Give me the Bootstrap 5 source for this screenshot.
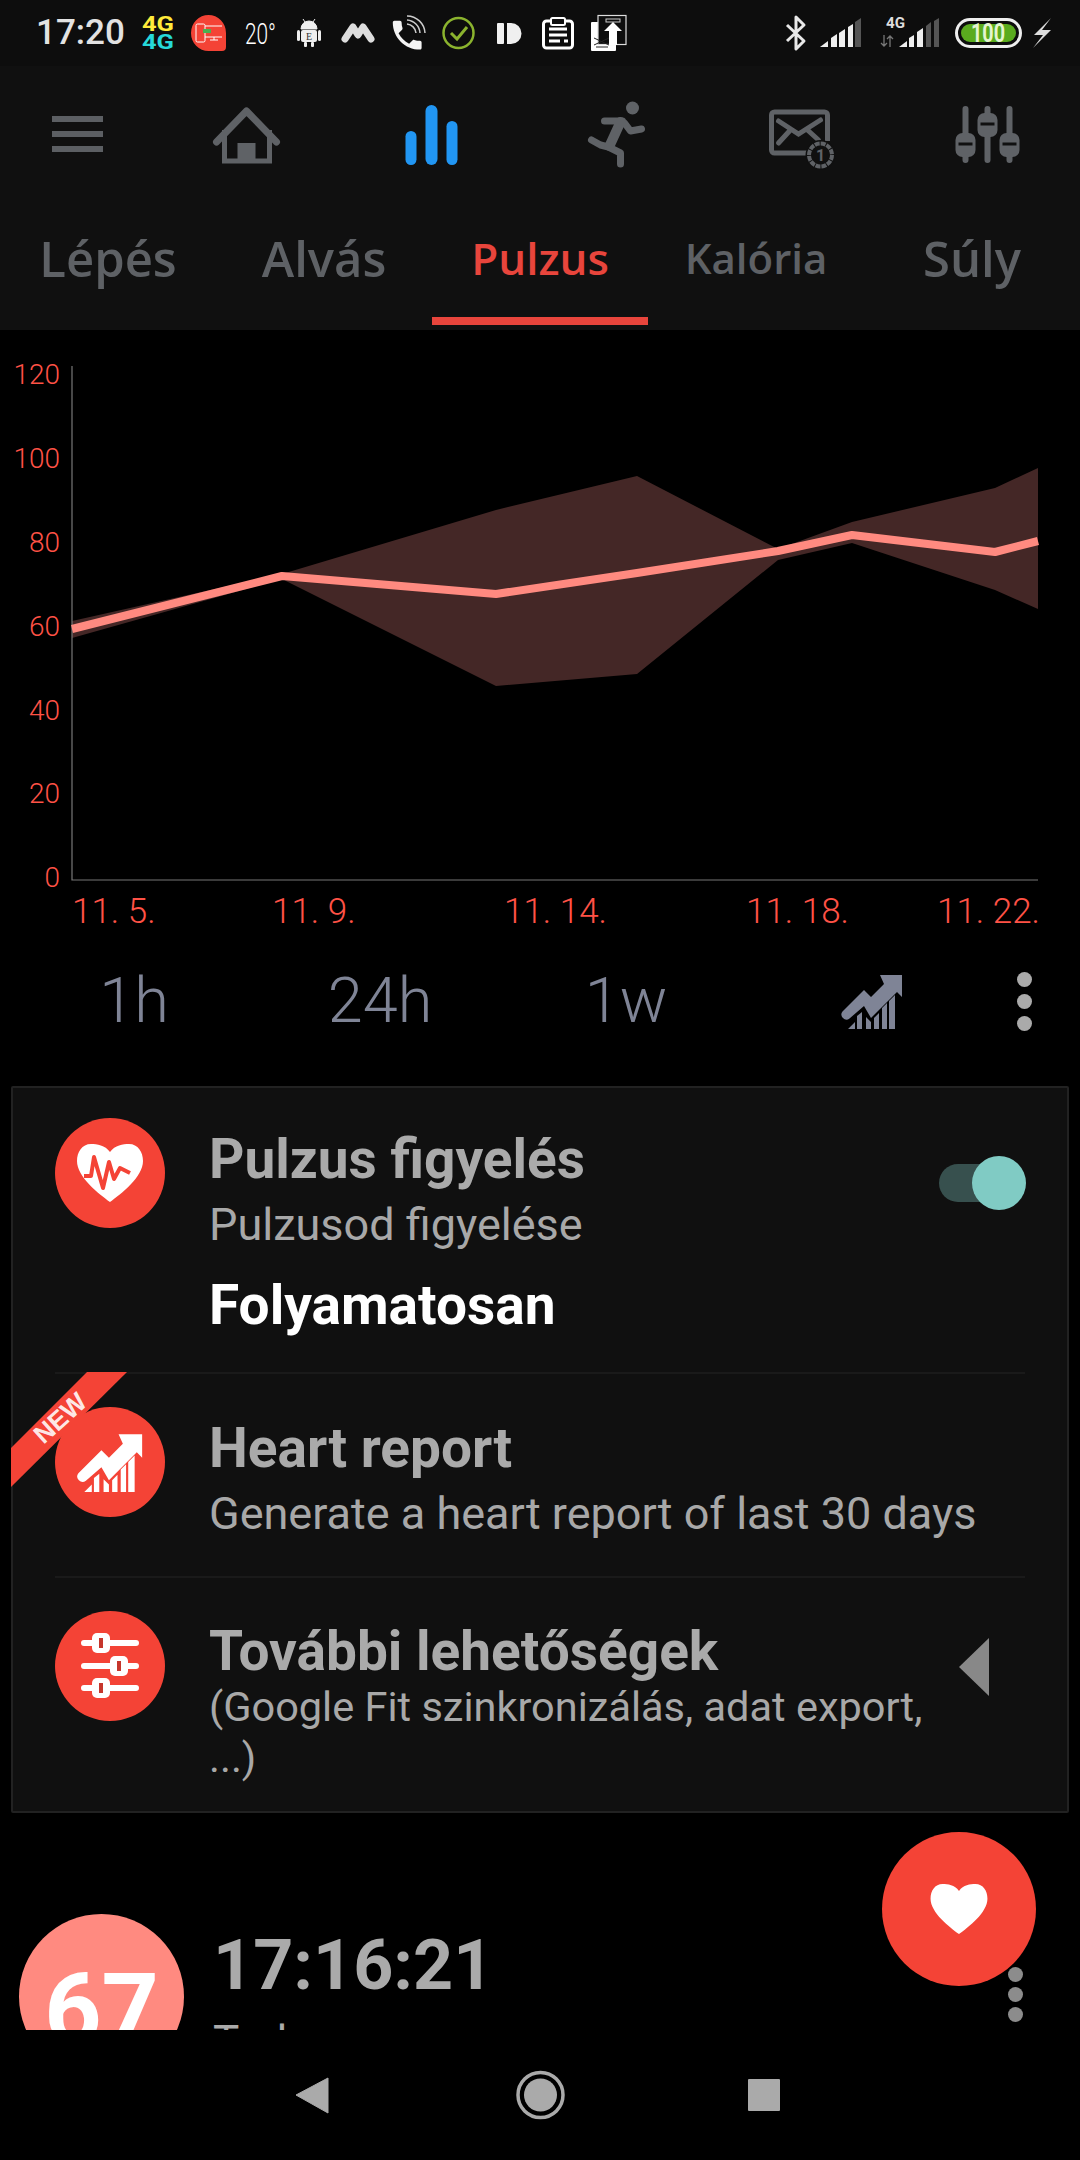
<!DOCTYPE html>
<html lang="en">
<head>
  <meta charset="UTF-8" />
  <meta name="viewport" content="width=device-width, initial-scale=1.0"/>
  <title>Pulzus</title>
  <link href="https://cdn.jsdelivr.net/npm/bootstrap@5.3.3/dist/css/bootstrap.min.css" rel="stylesheet">
  <style>
    body { background: #000; font-family: Roboto, sans-serif; margin: 0; }
    svg { display: block; overflow: visible; }

    .phone { width: 1080px; height: 2160px; background: #000; overflow: hidden; }

    /* status bar */
    .stat-bar { height: 66px; background: #0d0d0d; padding-left: 36px; }
    .stat-time { width: 106px; font-size: 35px; font-weight: 500; color: #e2e2e2; line-height: 66px; }
    .stat-text { font-family: Roboto, sans-serif; }

    /* toolbar and tabs */
    .head-wrap { background: #101010; height: 264px; }
    .tool-row { height: 138px; }
    .tool-first { width: 154px; }
    .tool-item { width: 185px; }
    .tab-row .nav-link {
      padding: 24px 0 29px; line-height: 60px; border-bottom: 8px solid transparent; border-radius: 0;
      font-family: "Open Sans", sans-serif; font-size: 49px; font-weight: 600; color: #5e6165;
    }
    .tab-row .nav-link.active { color: #e8453c; border-bottom-color: #e8453c; font-size: 44px; }
    .tab-row .nav-link.tab-small { font-size: 42px; }

    /* chart */
    .chart-text { font-family: Roboto, sans-serif; font-weight: 300; fill: #ff5246; }
    .range-row { height: 102px; padding-left: 11px; margin-bottom: 34px; }
    .range-item { width: 246px; font-size: 63px; font-weight: 300; color: #7f8496; line-height: 102px; }
    .dot-stack { width: 58px; gap: 7px; }
    .dot { width: 15px; height: 15px; background: #aaa; border-radius: 50%; }

    /* settings card */
    .set-card { margin: 0 11px; width: 1058px; height: 727px; background: #101010; border: 2px solid #222; border-radius: 2px; }
    .set-row { margin: 0 42px; border-bottom: 2px solid #1a1a1a; }
    .row-a { height: 286px; }
    .row-b { height: 204px; }
    .row-c { height: 233px; border-bottom: 0; }
    .red-disc { width: 110px; height: 110px; background: #f44336; flex-shrink: 0; margin-right: 44px; }
    .row-a .red-disc { margin-top: 30px; }
    .row-b .red-disc, .row-c .red-disc { margin-top: 33px; }
    .set-text { min-width: 0; }
    .row-a .set-text { padding-top: 41px; }
    .row-b .set-text { padding-top: 44px; }
    .row-c .set-text { padding-top: 43px; width: 740px; }
    .set-title { font-size: 55px; font-weight: 700; line-height: 60px; color: #aaa; }
    .set-sub { font-size: 45px; line-height: 52px; color: #a8a8a8; margin-top: 10px; }
    .row-c .set-sub { margin-top: 0; font-size: 41.5px; line-height: 51px; }
    .set-value { font-size: 55px; font-weight: 700; line-height: 60px; color: #fff; margin-top: 24px; }
    .toggle-box { position: relative; width: 87px; height: 54px; margin: 68px -1px 0 auto; }
    .toggle-track { position: absolute; left: 0; top: 8px; width: 62px; height: 38px; border-radius: 19px; background: #37504e; }
    .toggle-thumb { position: absolute; right: 0; top: 0; width: 54px; height: 54px; border-radius: 50%; background: #80cbc4; }
    .more-arrow { margin: 60px 36px 0 auto; }
    .new-ribbon { position: absolute; left: -2px; top: 284px; }

    /* reading list */
    .read-row { height: 217px; padding: 0 0 0 19px; }
    .read-disc {
      width: 165px; height: 165px; margin-top: 101px; flex-shrink: 0; background: #ff8a80; color: #fff;
      font-size: 100px; font-weight: 700; padding-top: 21px;
    }
    .read-text { margin-left: 29px; padding-top: 117px; }
    .read-time { font-size: 70px; font-weight: 700; line-height: 70px; color: #aaa; }
    .read-day { font-size: 44px; line-height: 60px; color: #aaa; margin-top: 12px; }
    .read-dots { position: absolute; left: 1008px; top: 1967px; gap: 5px; }
    .read-dots .dot { background: #8c8c8c; }
    .fab { position: absolute; left: 882px; top: 1832px; width: 154px; height: 154px; background: #f44336; }

    .sys-nav { height: 130px; background: #000; gap: 162px; }
  </style>
</head>
<body>
  <div class="phone position-relative d-flex flex-column">

    <!-- Status bar -->
    <div class="stat-bar d-flex align-items-center">
      <div class="stat-time">17:20</div>
      <svg width="484" height="66" viewBox="142 0 484 66">
        <text class="stat-text" x="142" y="31" font-size="20" font-weight="700" fill="#ffeb3b" textLength="32" lengthAdjust="spacingAndGlyphs">4G</text>
        <text class="stat-text" x="142" y="49" font-size="20" font-weight="700" fill="#26d9d9" textLength="32" lengthAdjust="spacingAndGlyphs">4G</text>
        <path d="M208.5 15a17.5 18 0 0 1 17.5 18V47q0 4-4 4H208.5a17.5 18 0 0 1 0-36z" fill="#f44336"/>
        <rect x="196" y="24" width="9" height="18" rx="1.5" fill="none" stroke="#fff" stroke-width="1"/>
        <path d="M205 26H222M205 37H222M214 37V40M210 40H218" stroke="#fff" stroke-width="1" fill="none"/>
        <rect x="203" y="29" width="8" height="4" fill="#4caf50"/>
        <text class="stat-text" x="245" y="44" font-size="30" font-weight="300" fill="#fff" textLength="31" lengthAdjust="spacingAndGlyphs">20°</text>
        <path d="M301 29a8 8 0 0 1 16 0zM303 19l2 3M315 19l-2 3" fill="#eee" stroke="#eee" stroke-width="1"/>
        <rect x="301" y="30" width="16" height="12" rx="2" fill="#eee"/>
        <rect x="297" y="30" width="3" height="11" rx="1.5" fill="#eee"/>
        <rect x="318" y="30" width="3" height="11" rx="1.5" fill="#eee"/>
        <rect x="304" y="42" width="3" height="5" rx="1" fill="#eee"/>
        <rect x="311" y="42" width="3" height="5" rx="1" fill="#eee"/>
        <text x="306" y="40" font-size="10" font-family="Liberation Serif, serif" fill="#333">E</text>
        <path d="M345 39L353 27L358 35L363 27L371 39" fill="none" stroke="#ddd" stroke-width="7" stroke-linecap="round" stroke-linejoin="round"/>
        <path transform="translate(388 16) scale(1.6)" d="M6.62 10.79c1.44 2.83 3.76 5.14 6.59 6.59l2.2-2.2c.27-.27.67-.36 1.02-.24 1.12.37 2.33.57 3.57.57.55 0 1 .45 1 1V20c0 .55-.45 1-1 1-9.39 0-17-7.61-17-17 0-.55.45-1 1-1h3.5c.55 0 1 .45 1 1 0 1.25.2 2.45.57 3.57.11.35.03.74-.25 1.02l-2.2 2.2z" fill="#f4f4f4"/>
        <path d="M407 24a10 10 0 0 1 9 9M407 20a14 14 0 0 1 13 13M407 16a18 18 0 0 1 18 17" fill="none" stroke="#ccc" stroke-width="1.5"/>
        <circle cx="458.5" cy="33" r="15" fill="none" stroke="#8bb32e" stroke-width="2.5"/>
        <path d="M451 33l6 6 10-12" fill="none" stroke="#8bb32e" stroke-width="3"/>
        <rect x="497" y="23" width="7" height="21" rx="1" fill="#f0f0f0"/>
        <path d="M507 23h4a10.5 10.5 0 0 1 0 21h-4z" fill="#f0f0f0"/>
        <rect x="543.5" y="21" width="29" height="27" rx="3" fill="none" stroke="#fff" stroke-width="3"/>
        <rect x="551" y="18" width="14" height="7" rx="1.5" fill="#101010" stroke="#fff" stroke-width="2"/>
        <path d="M549 29h18M549 35h18M549 41h11M564 41h4" stroke="#fff" stroke-width="3"/>
        <rect x="591" y="22" width="25" height="29" rx="1" fill="#fff"/>
        <rect x="598" y="15.5" width="28" height="29" fill="#0d0d0d" stroke="#ddd" stroke-width="1.2"/>
        <rect x="606" y="19" width="14" height="3" fill="none" stroke="#ccc" stroke-width="1"/>
        <path d="M604 31l9-9 9 9h-5v14h-8V31z" fill="#fff"/>
        <path d="M594 38l15 7M609 38l-15 7M596 47h12" stroke="#222" stroke-width="1" fill="none"/>
      </svg>
      <svg class="ms-auto" width="300" height="66" viewBox="780 0 300 66">
        <path d="M787 25l17 16-8 8V17l8 8-17 16" fill="none" stroke="#e8e8e8" stroke-width="3" stroke-linejoin="round"/>
        <polygon points="820,47 828,41 828,47" fill="#eee"/>
        <polygon points="831,47 831,38 837,34 837,47" fill="#eee"/>
        <polygon points="839,47 839,33 845,29 845,47" fill="#eee"/>
        <polygon points="848,47 848,27 853,24 853,47" fill="#eee"/>
        <polygon points="855,47 855,22 861,18 861,47" fill="#555"/>
        <text class="stat-text" x="886" y="28" font-size="15" font-weight="700" fill="#ddd" textLength="19" lengthAdjust="spacingAndGlyphs">4G</text>
        <path d="M884 35v11M881 43l3 3 3-3M890 47V36M887 39l3-3 3 3" fill="none" stroke="#777" stroke-width="1.3"/>
        <polygon points="899,47 907,41 907,47" fill="#eee"/>
        <polygon points="909,47 909,38 914,35 914,47" fill="#eee"/>
        <polygon points="917,47 917,32 923,28 923,47" fill="#eee"/>
        <polygon points="926,47 926,26 931,22 931,47" fill="#555"/>
        <polygon points="934,47 934,21 939,18 939,47" fill="#555"/>
        <rect x="956.5" y="19.5" width="64" height="27" rx="13.5" fill="none" stroke="#eee" stroke-width="3"/>
        <rect x="961" y="24" width="55" height="18" rx="9" fill="#5aab1e"/>
        <text class="stat-text" x="971" y="42" font-size="25" font-weight="700" fill="#e4f5d0" textLength="34" lengthAdjust="spacingAndGlyphs">100</text>
        <polygon points="1051,18 1034,35 1043,35 1033,48 1051,30 1042,30" fill="#ddd"/>
      </svg>
    </div>

    <!-- Toolbar and tabs -->
    <div class="head-wrap">
      <div class="tool-row d-flex align-items-center">
        <div class="tool-first d-flex justify-content-center">
          <svg width="80" height="68" viewBox="37 101 80 68">
            <path d="M52 119H103M52 134H103M52 149H103" stroke="#5c5f63" stroke-width="6"/>
          </svg>
        </div>
        <div class="tool-item d-flex justify-content-center">
          <svg width="80" height="68" viewBox="206.5 101 80 68">
            <path d="M216 142L246 111L276 142" fill="none" stroke="#5f6266" stroke-width="7" stroke-linecap="round" stroke-linejoin="round"/>
            <path d="M224 130V161H269V130" fill="none" stroke="#5f6266" stroke-width="5"/>
            <rect x="237" y="143" width="18" height="18" fill="#5f6266"/>
          </svg>
        </div>
        <div class="tool-item d-flex justify-content-center">
          <svg width="80" height="68" viewBox="391.5 101 80 68">
            <rect x="405" y="131" width="11" height="34" rx="5.5" fill="#2196f3"/>
            <rect x="425" y="105" width="12" height="60" rx="6" fill="#2196f3"/>
            <rect x="446" y="121" width="11" height="44" rx="5.5" fill="#2196f3"/>
          </svg>
        </div>
        <div class="tool-item d-flex justify-content-center">
          <svg width="80" height="68" viewBox="576.5 101 80 68">
            <circle cx="632" cy="108" r="6.5" fill="#5f6266"/>
            <path d="M604 121H622M608 147L620 153V164M608 147L600 145L591 140M624 123L630 131L641 129" fill="none" stroke="#5f6266" stroke-width="7" stroke-linecap="round" stroke-linejoin="round"/>
            <path d="M620 122L609 146" stroke="#5f6266" stroke-width="10" stroke-linecap="round"/>
          </svg>
        </div>
        <div class="tool-item d-flex justify-content-center">
          <svg width="80" height="68" viewBox="761.5 101 80 68">
            <path d="M808 153H774a3 3 0 0 1-3-3V115a3 3 0 0 1 3-3H824a3 3 0 0 1 3 3V141" fill="none" stroke="#5f6266" stroke-width="5"/>
            <path d="M778 121L798 134L820 120M778 143L789 131M818 140L807 130" fill="none" stroke="#5f6266" stroke-width="5" stroke-linecap="round"/>
            <circle cx="820" cy="155" r="15" fill="#101010"/>
            <circle cx="820" cy="155" r="11.5" fill="none" stroke="#5f6266" stroke-width="4" stroke-dasharray="5 1"/>
            <text x="820" y="161" font-size="16" font-weight="700" font-family="Roboto, sans-serif" text-anchor="middle" fill="#5f6266">1</text>
          </svg>
        </div>
        <div class="tool-item d-flex justify-content-center">
          <svg width="80" height="68" viewBox="946.5 101 80 68">
            <path d="M965 109V160M987 109V160M1009 109V160" stroke="#5f6266" stroke-width="6" stroke-linecap="round"/>
            <rect x="955" y="133" width="20" height="24" rx="7" fill="#5f6266"/>
            <rect x="977" y="113" width="20" height="24" rx="7" fill="#5f6266"/>
            <rect x="999" y="133" width="20" height="24" rx="7" fill="#5f6266"/>
            <path d="M958 144H972M980 124H994M1002 144H1016" stroke="#101010" stroke-width="3"/>
          </svg>
        </div>
      </div>
      <ul class="nav nav-justified tab-row">
        <li class="nav-item"><a class="nav-link" href="#">Lépés</a></li>
        <li class="nav-item"><a class="nav-link" href="#">Alvás</a></li>
        <li class="nav-item"><a class="nav-link active" href="#">Pulzus</a></li>
        <li class="nav-item"><a class="nav-link tab-small" href="#">Kalória</a></li>
        <li class="nav-item"><a class="nav-link" href="#">Súly</a></li>
      </ul>
    </div>

    <!-- Scrolling content -->
    <div class="flex-grow-1 overflow-hidden">
      <svg width="1080" height="620" viewBox="0 330 1080 620">
        <polygon fill="#442726" points="72,621 282,574 496,510 637,476 778,549 852,522 995,488 1038,468 1038,609 995,590 852,543 778,560 637,674 496,686 282,579 72,638"/>
        <path d="M72 366V880H1038" fill="none" stroke="#777" stroke-width="1.2"/>
        <polyline fill="none" stroke="#ff8a80" stroke-width="8" stroke-linejoin="round" points="72,629 282,576 496,594 637,573 778,551 852,535 995,552 1038,541"/>
        <g class="chart-text" font-size="28" text-anchor="end">
          <text x="60" y="384">120</text>
          <text x="60" y="468">100</text>
          <text x="60" y="552">80</text>
          <text x="60" y="636">60</text>
          <text x="60" y="720">40</text>
          <text x="60" y="803">20</text>
          <text x="60" y="887">0</text>
        </g>
        <g class="chart-text" font-size="35">
          <text x="72" y="923">11. 5.</text>
          <text x="272" y="923">11. 9.</text>
          <text x="504" y="923">11. 14.</text>
          <text x="746" y="923">11. 18.</text>
          <text x="937" y="923">11. 22.</text>
        </g>
      </svg>

      <div class="range-row d-flex align-items-center">
        <div class="range-item text-center">1h</div>
        <div class="range-item text-center">24h</div>
        <div class="range-item text-center">1w</div>
        <div class="range-item d-flex justify-content-center align-items-center">
          <svg width="60" height="56" viewBox="0 0 60 56" fill="#7f8496">
            <use href="#trend-icon"/>
          </svg>
        </div>
        <div class="dot-stack d-flex flex-column align-items-center">
          <div class="dot"></div><div class="dot"></div><div class="dot"></div>
        </div>
      </div>

      <div class="set-card position-relative">
        <div class="set-row row-a d-flex">
          <div class="red-disc rounded-circle d-flex align-items-center justify-content-center">
            <svg width="66" height="58" viewBox="0 0 66 58">
              <use href="#heart-shape" fill="#fff"/>
              <path d="M7 32H14L17 13L26 44L32 18L37 35L43 24L53 29" fill="none" stroke="#f44336" stroke-width="4" stroke-linejoin="round"/>
            </svg>
          </div>
          <div class="set-text">
            <div class="set-title">Pulzus figyelés</div>
            <div class="set-sub">Pulzusod figyelése</div>
            <div class="set-value">Folyamatosan</div>
          </div>
          <div class="toggle-box">
            <div class="toggle-track"></div>
            <div class="toggle-thumb"></div>
          </div>
        </div>
        <div class="set-row row-b d-flex">
          <div class="red-disc rounded-circle d-flex align-items-center justify-content-center">
            <svg width="66" height="60" viewBox="0 0 60 56" fill="#fff">
              <use href="#trend-icon"/>
            </svg>
          </div>
          <div class="set-text">
            <div class="set-title">Heart report</div>
            <div class="set-sub">Generate a heart report of last 30 days</div>
          </div>
        </div>
        <div class="set-row row-c d-flex">
          <div class="red-disc rounded-circle d-flex align-items-center justify-content-center">
            <svg width="60" height="66" viewBox="80 1633 60 66">
              <path d="M84 1643H136M84 1666H136M84 1688H136" stroke="#fff" stroke-width="6" stroke-linecap="round"/>
              <rect x="92" y="1633" width="18" height="20" rx="5" fill="#fff"/>
              <rect x="110" y="1656" width="18" height="20" rx="5" fill="#fff"/>
              <rect x="92" y="1678" width="18" height="20" rx="5" fill="#fff"/>
              <path d="M101 1638V1648M119 1661V1671M101 1683V1693" stroke="#c6362c" stroke-width="4"/>
            </svg>
          </div>
          <div class="set-text">
            <div class="set-title">További lehetőségek</div>
            <div class="set-sub">(Google Fit szinkronizálás, adat export, ...)</div>
          </div>
          <svg class="more-arrow flex-shrink-0" width="30" height="58" viewBox="0 0 30 58">
            <polygon points="30,0 30,58 0,29" fill="#888"/>
          </svg>
        </div>
        <svg class="new-ribbon" width="116" height="116" viewBox="11 1374 116 116">
          <polygon points="87,1374 127,1374 11,1489 11,1450" fill="#f44336"/>
          <text x="0" y="0" transform="translate(60 1420) rotate(-42)" text-anchor="middle" dominant-baseline="central" font-family="Liberation Sans, sans-serif" font-weight="700" font-size="26" fill="#fff" fill-opacity=".9">NEW</text>
        </svg>
      </div>

      <div class="read-row d-flex">
        <div class="read-disc rounded-circle text-center">67</div>
        <div class="read-text">
          <div class="read-time">17:16:21</div>
          <div class="read-day">Today</div>
        </div>
      </div>
    </div>

    <!-- Bottom system nav -->
    <div class="sys-nav d-flex align-items-center justify-content-center flex-shrink-0">
      <svg width="64" height="64" viewBox="282 2063 64 64">
        <polygon points="328,2078 328,2113 296,2095" fill="#aaa" stroke="#aaa" stroke-width="1" stroke-linejoin="round"/>
      </svg>
      <svg width="64" height="64" viewBox="508 2063 64 64">
        <circle cx="540.5" cy="2095" r="22.5" fill="none" stroke="#aaa" stroke-width="3.5"/>
        <circle cx="540.5" cy="2095" r="16.5" fill="#aaa"/>
      </svg>
      <svg width="64" height="64" viewBox="734 2063 64 64">
        <rect x="748" y="2079" width="32" height="32" rx="1" fill="#aaa"/>
      </svg>
    </div>

    <!-- Overlays -->
    <div class="read-dots d-flex flex-column">
      <div class="dot"></div><div class="dot"></div><div class="dot"></div>
    </div>
    <div class="fab rounded-circle d-flex align-items-center justify-content-center">
      <svg width="58" height="50" viewBox="0 0 66 58"><use href="#heart-shape" fill="#fff"/></svg>
    </div>

    <!-- Shared icon shapes -->
    <svg width="0" height="0" class="position-absolute">
      <defs>
        <g id="trend-icon">
          <path d="M0.5 38.5L22 17L29 24L42 11L38 2H60V24L55 19L29 45L22 33L7.5 45.5A5 5 0 0 1 0.5 38.5Z"/>
          <path d="M6 56L13 49V56ZM15 56V43L20 39V56ZM24 56V44L29 49L29 56ZM32 56V45L37 40V56ZM40 56V35L45 30V56ZM47 56V28L53 22V56Z"/>
        </g>
        <path id="heart-shape" d="M33 8C28 1 20 0 14 0C5 0 0 8 0 17C0 33 22 50 33 58C44 50 66 33 66 17C66 8 61 0 52 0C46 0 38 1 33 8Z"/>
      </defs>
    </svg>
  </div>

  <script src="https://cdn.jsdelivr.net/npm/bootstrap@5.3.3/dist/js/bootstrap.bundle.min.js"></script>
</body>
</html>
